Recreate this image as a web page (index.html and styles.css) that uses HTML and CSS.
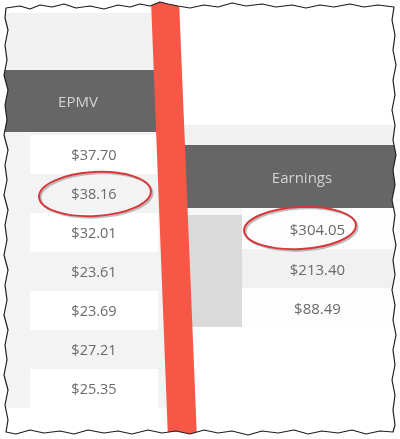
FILE: index.html
```html
<!DOCTYPE html>
<html>
<head>
<meta charset="utf-8">
<link rel="stylesheet" href="styles.css">
</head>
<body>
<div class="canvas">
  <div class="content">
    <section class="panel left">
      <div class="top-band"></div>
      <div class="head">EPMV</div>
      <div class="rows">
        <div class="row"><span class="cell white">$37.70</span></div>
        <div class="row"><span class="cell">$38.16</span></div>
        <div class="row"><span class="cell white">$32.01</span></div>
        <div class="row"><span class="cell">$23.61</span></div>
        <div class="row"><span class="cell white">$23.69</span></div>
        <div class="row"><span class="cell">$27.21</span></div>
        <div class="row"><span class="cell white">$25.35</span></div>
      </div>
    </section>
    <section class="panel right">
      <div class="white-band"></div>
      <div class="grey-band"></div>
      <div class="head">Earnings</div>
      <div class="body">
        <div class="side-box"></div>
        <div class="rcol">
          <span class="rcell white">$304.05</span>
          <span class="rcell">$213.40</span>
          <span class="rcell white">$88.49</span>
        </div>
      </div>
    </section>
  </div>
  <svg class="overlay" width="400" height="439" viewBox="0 0 400 439">
    <polygon points="151,0 179,0 197,439 168,439" fill="#f65747"/>
    <g fill="none">
      <ellipse cx="96.5" cy="195.5" rx="56" ry="22" stroke="#8a8a8a" stroke-width="2" opacity="0.55" transform="rotate(-3 96 195)"/>
      <ellipse cx="95" cy="194" rx="56" ry="22" stroke="#d8373a" stroke-width="2" transform="rotate(-3 95 194)"/>
      <ellipse cx="301.5" cy="229.5" rx="56" ry="21" stroke="#8a8a8a" stroke-width="2" opacity="0.55" transform="rotate(-3 301 229)"/>
      <ellipse cx="300" cy="228" rx="56" ry="21" stroke="#d8373a" stroke-width="2" transform="rotate(-3 300 228)"/>
    </g>
    <path fill="#ffffff" fill-rule="evenodd" d="M0,0 H400 V439 H0 Z M6,8 L20,6 L30,9 L40,5 L52,7 L64,4 L76,8 L90,6 L104,9 L118,5 L130,7 L140,4 L150,6 L160,2 L168,4 L178,6 L190,8 L204,5 L218,7 L232,3 L246,6 L262,4 L276,7 L292,5 L306,8 L320,5 L334,7 L350,4 L364,7 L378,5 L394,7 L392,20 L395,35 L393,50 L396,65 L393,80 L395,95 L392,110 L395,125 L393,140 L396,155 L393,170 L395,185 L392,200 L395,215 L393,230 L396,245 L393,260 L395,275 L392,290 L395,305 L393,320 L396,335 L393,350 L395,365 L392,380 L395,395 L393,410 L395,425 L393,432 L380,431 L366,434 L352,430 L338,433 L322,431 L308,434 L294,430 L278,433 L262,431 L248,435 L232,431 L218,433 L204,430 L190,434 L176,431 L162,433 L148,430 L132,434 L118,431 L104,433 L88,430 L74,434 L60,431 L44,433 L30,430 L16,434 L6,432 L8,420 L5,405 L8,390 L4,375 L7,360 L5,345 L8,330 L4,315 L7,300 L5,285 L8,270 L4,255 L7,240 L5,225 L8,210 L4,195 L7,180 L5,165 L8,150 L4,135 L7,120 L5,105 L8,90 L4,75 L7,60 L5,45 L8,30 L5,18 Z"/>
    <path fill="none" stroke="#1e1e1e" stroke-width="1.2" stroke-linejoin="round" d="M6,8 L20,6 L30,9 L40,5 L52,7 L64,4 L76,8 L90,6 L104,9 L118,5 L130,7 L140,4 L150,6 L160,2 L168,4 L178,6 L190,8 L204,5 L218,7 L232,3 L246,6 L262,4 L276,7 L292,5 L306,8 L320,5 L334,7 L350,4 L364,7 L378,5 L394,7 L392,20 L395,35 L393,50 L396,65 L393,80 L395,95 L392,110 L395,125 L393,140 L396,155 L393,170 L395,185 L392,200 L395,215 L393,230 L396,245 L393,260 L395,275 L392,290 L395,305 L393,320 L396,335 L393,350 L395,365 L392,380 L395,395 L393,410 L395,425 L393,432 L380,431 L366,434 L352,430 L338,433 L322,431 L308,434 L294,430 L278,433 L262,431 L248,435 L232,431 L218,433 L204,430 L190,434 L176,431 L162,433 L148,430 L132,434 L118,431 L104,433 L88,430 L74,434 L60,431 L44,433 L30,430 L16,434 L6,432 L8,420 L5,405 L8,390 L4,375 L7,360 L5,345 L8,330 L4,315 L7,300 L5,285 L8,270 L4,255 L7,240 L5,225 L8,210 L4,195 L7,180 L5,165 L8,150 L4,135 L7,120 L5,105 L8,90 L4,75 L7,60 L5,45 L8,30 L5,18 Z"/>
  </svg>
</div>
</body>
</html>
```
FILE: styles.css
```css
html, body {
  margin: 0;
  padding: 0;
  background: #ffffff;
}
.canvas {
  position: relative;
  width: 400px;
  height: 439px;
  overflow: hidden;
  font-family: "Open Sans", "Noto Sans", sans-serif;
}
.content {
  display: flex;
  width: 400px;
  height: 439px;
  filter: blur(0.5px);
}
.panel {
  display: flex;
  flex-direction: column;
}
.left {
  width: 170px;
  flex: none;
}
.right {
  flex: 1;
}
.top-band {
  height: 57px;
  margin-top: 13px;
  background: #f1f1f1;
}
.head {
  display: flex;
  align-items: center;
  justify-content: center;
  background: #666666;
  color: #d2d2d2;
  font-size: 15px;
}
.left .head {
  height: 62px;
  padding-right: 14px;
}
.rows {
  background: #f3f3f3;
  padding-top: 3px;
  display: flex;
  flex-direction: column;
}
.row {
  height: 39px;
  display: flex;
  padding-left: 30px;
}
.cell {
  width: 128px;
  display: flex;
  align-items: center;
  justify-content: center;
  color: #6a6a6a;
  font-size: 14.5px;
}
.cell.white {
  background: #ffffff;
}
.white-band {
  height: 125px;
  background: #ffffff;
}
.grey-band {
  height: 20px;
  background: #f1f1f1;
}
.right .head {
  height: 63px;
  padding-left: 34px;
}
.body {
  display: flex;
  height: 119px;
  background: #f6f6f6;
}
.side-box {
  width: 54px;
  margin-left: 18px;
  margin-top: 7px;
  background: #dadada;
}
.rcol {
  width: 151px;
  display: flex;
  flex-direction: column;
}
.rcell {
  height: 39px;
  display: flex;
  align-items: center;
  justify-content: center;
  background: #f1f1f1;
  color: #6a6a6a;
  font-size: 15px;
}
.rcell:first-child {
  height: 41px;
}
.rcell.white {
  background: #fdfdfd;
}
.overlay {
  position: absolute;
  left: 0;
  top: 0;
}
```
